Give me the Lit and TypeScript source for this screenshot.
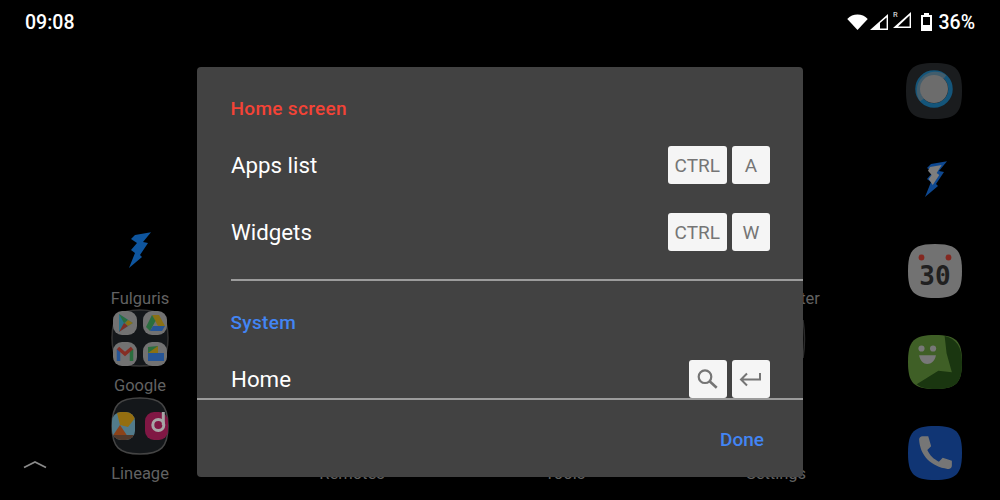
import { LitElement, html, css, svg } from 'lit';
import { customElement } from 'lit/decorators.js';

const BOLT = 'M8 4 L24 1.3 L16 11 L21 12 L13 24 L15 26 L2 37 L8 22 L4 19 L10 12 L4 8 Z';

@customElement('app-root')
export class AppRoot extends LitElement {
  static override styles = css`
    :host {
      display: block;
      position: relative;
      width: 1000px;
      height: 500px;
      overflow: hidden;
      background: #000;
      font-family: Roboto, 'Liberation Sans', sans-serif;
    }
    .status {
      display: flex;
      align-items: center;
      justify-content: space-between;
      height: 44px;
      padding: 0 25px;
      color: #fff;
      font-size: 19.5px;
      font-weight: 500;
    }
    .status-icons {
      display: flex;
      align-items: center;
    }
    .status-icons svg {
      display: block;
    }
    .signal {
      margin-left: 2px;
    }
    .signal-roaming {
      margin: -6px 0 0 5px;
    }
    .battery {
      margin: -1px 6px 0 10px;
    }
    .home-label {
      position: absolute;
      transform: translateX(-50%);
      color: #626262;
      font-size: 16.5px;
      line-height: 20px;
      white-space: nowrap;
    }
    .home-icon {
      position: absolute;
      display: block;
    }
    .dialog {
      position: absolute;
      left: 197px;
      top: 67px;
      width: 606px;
      height: 410px;
      display: flex;
      flex-direction: column;
      background: #424242;
      border-radius: 4px;
    }
    .scroll {
      height: 333px;
      overflow: hidden;
      padding: 29px 0 0 34px;
      box-sizing: border-box;
      border-bottom: 2px solid #9c9c9c;
    }
    .group-title {
      font-size: 19px;
      line-height: 26px;
      font-weight: 500;
      letter-spacing: 0.33px;
      margin-left: -0.5px;
    }
    .red {
      color: #f44336;
    }
    .blue {
      color: #4285f4;
    }
    .row {
      display: flex;
      align-items: center;
      justify-content: space-between;
      height: 38px;
      margin-top: 24px;
      padding-right: 33px;
      color: #fff;
      font-size: 22.3px;
    }
    .row + .row {
      margin-top: 29px;
    }
    .keys {
      display: flex;
      gap: 5px;
    }
    .key {
      display: flex;
      align-items: center;
      justify-content: center;
      min-width: 38px;
      height: 38px;
      padding: 0 7px;
      box-sizing: border-box;
      background: #f5f5f5;
      border-radius: 3px;
      color: #757575;
      font-size: 19px;
    }
    .key svg {
      display: block;
    }
    .divider {
      height: 2px;
      margin-top: 28px;
      background: #9c9c9c;
    }
    .system {
      margin-top: 29px;
    }
    .system + .row {
      margin-top: 24px;
    }
    .footer {
      display: flex;
      justify-content: flex-end;
      padding: 27px 39px 0 0;
    }
    .done {
      color: #4285f4;
      font-size: 19px;
      line-height: 26px;
      font-weight: 500;
    }
  `;

  private _squircle(fill: string) {
    return svg`<path d="M28 0 C50 0 56 6 56 28 C56 50 50 56 28 56 C6 56 0 50 0 28 C0 6 6 0 28 0 Z" fill=${fill}/>`;
  }

  private _statusIcons() {
    return html`
      <div class="status-icons">
        <svg width="21" height="16" viewBox="0 0 23 18">
          <path d="M0 5.5 C6 -1 17 -1 23 5.5 L11.5 18 Z" fill="#fff" />
        </svg>
        <svg class="signal" width="18" height="16" viewBox="0 0 18 16">
          <path d="M0 16 L18 0 V16 Z M10 14.6 H16.6 V3.4 L10 9 Z" fill="#fff" fill-rule="evenodd" />
        </svg>
        <svg class="signal-roaming" width="18" height="18" viewBox="0 0 18 18">
          <path d="M0 18 L18 2 V18 Z M5 16.6 H16.6 V5.4 Z" fill="#fff" fill-rule="evenodd" />
          <text x="0" y="7" font-size="7.5" font-family="Roboto" fill="#d0d0d0">R</text>
        </svg>
        <svg class="battery" width="11" height="18" viewBox="0 0 11 18">
          <path d="M3 0 H8 V2 H11 V18 H0 V2 H3 Z M2 4 V12 H9 V4 Z" fill="#fff" fill-rule="evenodd" />
        </svg>
        <span>36%</span>
      </div>
    `;
  }

  private _homeIcons() {
    return html`
      <svg class="home-icon" style="left:906px;top:63px" width="56" height="56" viewBox="0 0 56 56">
        ${this._squircle('#1a1c1e')}
        <circle cx="28" cy="26" r="16.5" fill="none" stroke="#14557a" stroke-width="4.5" />
        <path d="M39 14 A16.5 16.5 0 0 0 16 37" fill="none" stroke="#425d6c" stroke-width="4.5" />
        <circle cx="28" cy="26" r="14" fill="#6c6c6c" />
      </svg>
      <svg class="home-icon" style="left:923px;top:160px" width="26" height="39" viewBox="0 0 26 39">
        <path d=${BOLT} fill="#0e4890" />
        <path d="M7 7 L18.7 5 L13.7 13 L16.3 15 L9.7 25 L5.7 19 L8.7 15 L5 10.7 Z" fill="#7e7e7e" />
      </svg>
      <svg class="home-icon" style="left:908px;top:244px" width="54" height="54" viewBox="0 0 56 56">
        ${this._squircle('#727272')}
        <circle cx="14" cy="14" r="3" fill="#842820" />
        <circle cx="42" cy="14" r="3" fill="#842820" />
        <text x="28" y="43" text-anchor="middle" font-size="27" font-weight="700" font-family="DejaVu Sans Mono" fill="#202020">30</text>
      </svg>
      <svg class="home-icon" style="left:908px;top:335px" width="54" height="54" viewBox="0 0 56 56">
        ${this._squircle('#3f5f26')}
        <path d="M38 1 C50 4 56 12 56 28 C56 50 50 56 28 56 C20 56 14 55 9 51 L31.5 37 L45.5 38.5 L40 19 Z" fill="#1a3610" />
        <circle cx="14" cy="14" r="3.2" fill="#787878" />
        <circle cx="26" cy="14" r="3.2" fill="#787878" />
        <path d="M11.5 21 H29 C28 27 24 30 20 30 C16 30 12.5 27 11.5 21 Z" fill="#787878" />
      </svg>
      <svg class="home-icon" style="left:908px;top:426px" width="54" height="54" viewBox="0 0 56 56">
        ${this._squircle('#103574')}
        <path d="M11.5 14 C11.5 12 13 10.5 15 10.5 L21 10.5 L24 21 L20 25 C23 31 26 34 32 37 L36 33 L45.5 36 L45.5 41 C45.5 43.5 43.5 45 41 44.5 C24 42 12.5 31 11.5 14 Z" fill="#767676" />
      </svg>

      <svg class="home-icon" style="left:127px;top:231px" width="26" height="39" viewBox="0 0 26 39">
        <path d=${BOLT} fill="#0e559e" />
      </svg>
      <div class="home-label" style="left:140px;top:289px">Fulguris</div>

      <svg class="home-icon" style="left:111px;top:309px" width="58" height="58" viewBox="0 0 58 58">
        <path d="M29 1 C50 1 57 8 57 29 C57 50 50 57 29 57 C8 57 1 50 1 29 C1 8 8 1 29 1 Z" fill="#14171a" stroke="#333" stroke-width="1.5" />
        <rect x="2" y="2" width="24" height="24" rx="9" fill="#727272" />
        <path d="M8 5 L22 14 L8 23 Z" fill="#2a7289" />
        <path d="M8 5 L17 11 L13 14 Z" fill="#2a6e3e" />
        <path d="M8 23 L17 17 L13 14 Z" fill="#802e24" />
        <path d="M17 11 L22 14 L17 17 L14 14 Z" fill="#8a7014" />
        <rect x="32" y="2" width="24" height="24" rx="9" fill="#727272" />
        <path d="M41 6 L48 6 L54 17 L47 17 Z" fill="#8a7014" />
        <path d="M41 6 L35 18 L39 22 L44.5 12 Z" fill="#2a6e3e" />
        <path d="M39 22 L51 22 L54 17 L42 17 Z" fill="#265596" />
        <rect x="2" y="33" width="24" height="24" rx="9" fill="#727272" />
        <path d="M7.5 52 V40" stroke="#265596" stroke-width="3.5" fill="none" />
        <path d="M20.5 52 V40" stroke="#2a6e3e" stroke-width="3.5" fill="none" />
        <path d="M7 39 L14 45 L21 39" stroke="#862e24" stroke-width="3.5" fill="none" />
        <rect x="32" y="33" width="24" height="24" rx="9" fill="#727272" />
        <rect x="37" y="44" width="16" height="8" fill="#265596" />
        <path d="M37 44 V38 L47 37 V44 Z" fill="#2a6e3e" />
        <path d="M37 44 L47 37 V44 Z" fill="#8a7014" />
      </svg>
      <div class="home-label" style="left:140px;top:376px">Google</div>

      <svg class="home-icon" style="left:111px;top:397px" width="58" height="58" viewBox="0 0 58 58">
        <defs>
          <clipPath id="lineage-tile"><rect x="1" y="15" width="23" height="28" rx="9" /></clipPath>
        </defs>
        <path d="M29 1 C50 1 57 8 57 29 C57 50 50 57 29 57 C8 57 1 50 1 29 C1 8 8 1 29 1 Z" fill="#14171a" stroke="#444" stroke-width="1.5" />
        <g clip-path="url(#lineage-tile)">
          <rect x="1" y="15" width="23" height="28" fill="#527b8b" />
          <path d="M5.7 14.7 H24 V21 L17 30 L9 28 Z" fill="#946e10" />
          <path d="M9 28 L2.3 38 H15.7 Z" fill="#8b4219" />
          <rect x="1" y="38" width="23" height="5" fill="#52392b" />
        </g>
        <rect x="34" y="15" width="23" height="28" rx="9" fill="#801744" />
        <circle cx="47.3" cy="28" r="5.5" fill="none" stroke="#a6a6a6" stroke-width="3" />
        <path d="M52.3 15 V28" stroke="#a6a6a6" stroke-width="3" fill="none" />
      </svg>
      <div class="home-label" style="left:140px;top:464px">Lineage</div>

      <svg class="home-icon" style="left:23px;top:460px" width="24" height="9" viewBox="0 0 24 9">
        <path d="M1 7.5 L12 2 L23 7.5" fill="none" stroke="#8a8a8a" stroke-width="1.8" />
      </svg>

      <svg class="home-icon" style="left:800px;top:318px" width="8" height="42" viewBox="0 0 8 42">
        <path d="M3 2 Q6 21 3 40" fill="none" stroke="#2b2b2b" stroke-width="1.5" />
      </svg>
      <div class="home-label" style="left:810px;top:289px">ter</div>
      <div class="home-label" style="left:352px;top:464px">Remotes</div>
      <div class="home-label" style="left:565px;top:464px">Tools</div>
      <div class="home-label" style="left:776px;top:464px">Settings</div>
    `;
  }

  private _key(label: string) {
    return html`<div class="key">${label}</div>`;
  }

  override render() {
    return html`
      <div class="status">
        <span>09:08</span>
        ${this._statusIcons()}
      </div>
      ${this._homeIcons()}
      <div class="dialog">
        <div class="scroll">
          <div class="group-title red">Home screen</div>
          <div class="row">
            <span>Apps list</span>
            <div class="keys">${this._key('CTRL')}${this._key('A')}</div>
          </div>
          <div class="row">
            <span>Widgets</span>
            <div class="keys">${this._key('CTRL')}${this._key('W')}</div>
          </div>
          <div class="divider"></div>
          <div class="group-title blue system">System</div>
          <div class="row">
            <span>Home</span>
            <div class="keys">
              <div class="key">
                <svg width="24" height="24" viewBox="0 0 24 24">
                  <circle cx="9" cy="9.7" r="6.3" fill="none" stroke="#757575" stroke-width="2.2" />
                  <path d="M13.6 14.3 L20.7 20.7" stroke="#757575" stroke-width="2.6" />
                </svg>
              </div>
              <div class="key">
                <svg width="24" height="24" viewBox="0 0 24 24">
                  <path d="M21 6 V12.5 H2 M8 6.5 L2 12.5 L8 18.5" fill="none" stroke="#757575" stroke-width="2" />
                </svg>
              </div>
            </div>
          </div>
        </div>
        <div class="footer"><span class="done">Done</span></div>
      </div>
    `;
  }
}

declare global {
  interface HTMLElementTagNameMap {
    'app-root': AppRoot;
  }
}
